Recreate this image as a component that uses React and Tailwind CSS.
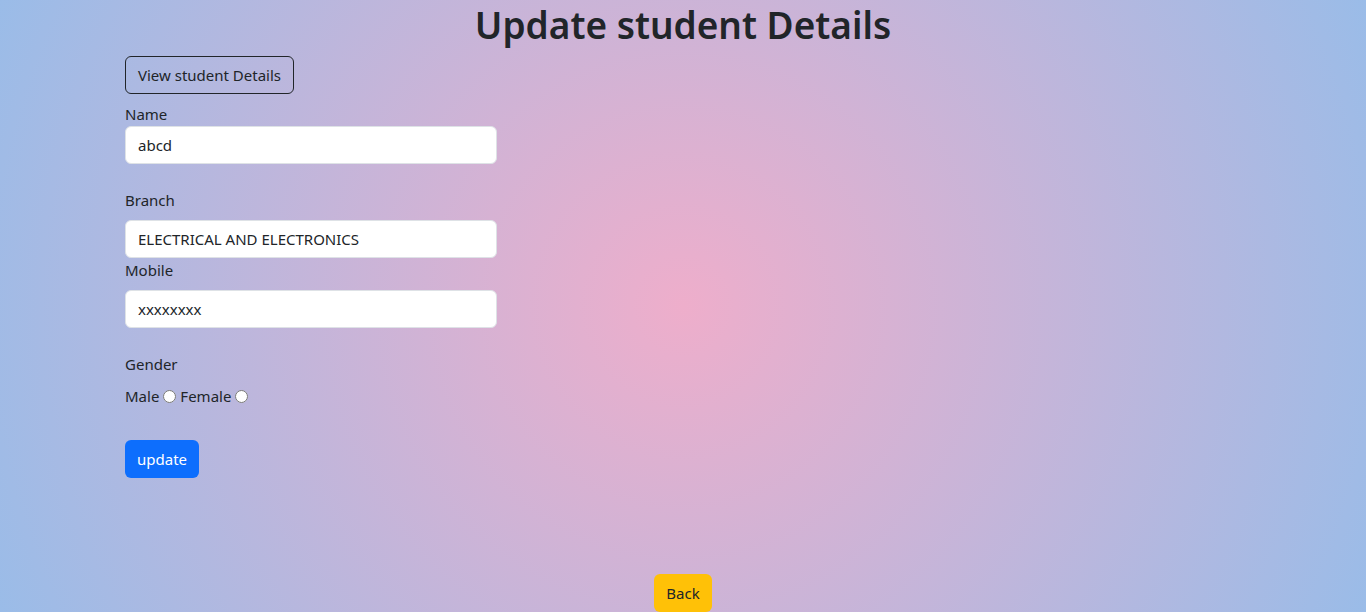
import React from 'react';

const Field = ({ label, value, top, gap = 'mt-2' }) => (
  <div className={top}>
    <label className="block leading-6">{label}</label>
    <input
      type="text"
      defaultValue={value}
      className={`${gap} block w-[372px] h-[38px] bg-white border border-[#dee2e6] rounded-[6px] px-3 text-[15px] text-[#212529] outline-none`}
    />
  </div>
);

export default function App() {
  return (
    <div
      className="min-h-[612px] w-full bg-[radial-gradient(circle,#eeaecb_0%,#9abce8_100%)] text-[#212529] text-[15px]"
      style={{ fontFamily: '"Noto Sans", "Open Sans", sans-serif' }}
    >
      <h1 className="text-center text-[37px] leading-[50px] font-semibold mb-[6px]">Update student Details</h1>

      <div className="pl-[125px]">
        <button className="h-[38px] px-3 border border-[#212529] rounded-[6px] leading-6">
          View student Details
        </button>

        <form className="mt-2">
          <Field label="Name" value="abcd" top="" gap="mt-0" />
          <Field label="Branch" value="ELECTRICAL AND ELECTRONICS" top="mt-6" />
          <Field label="Mobile" value="xxxxxxxx" top="" />

          <div className="mt-6 leading-6">Gender</div>
          <div className="mt-2 flex items-center gap-1 leading-6">
            <span>Male</span>
            <input type="radio" name="gender" className="w-[13px] h-[13px]" />
            <span>Female</span>
            <input type="radio" name="gender" className="w-[13px] h-[13px]" />
          </div>

          <button
            type="button"
            className="mt-8 h-[38px] px-3 rounded-[6px] bg-[#0d6efd] text-white leading-6"
          >
            update
          </button>
        </form>
      </div>

      <div className="mt-24 flex justify-center">
        <button className="h-[38px] px-3 rounded-[6px] bg-[#ffc107] text-[#212529] leading-6">Back</button>
      </div>
    </div>
  );
}
